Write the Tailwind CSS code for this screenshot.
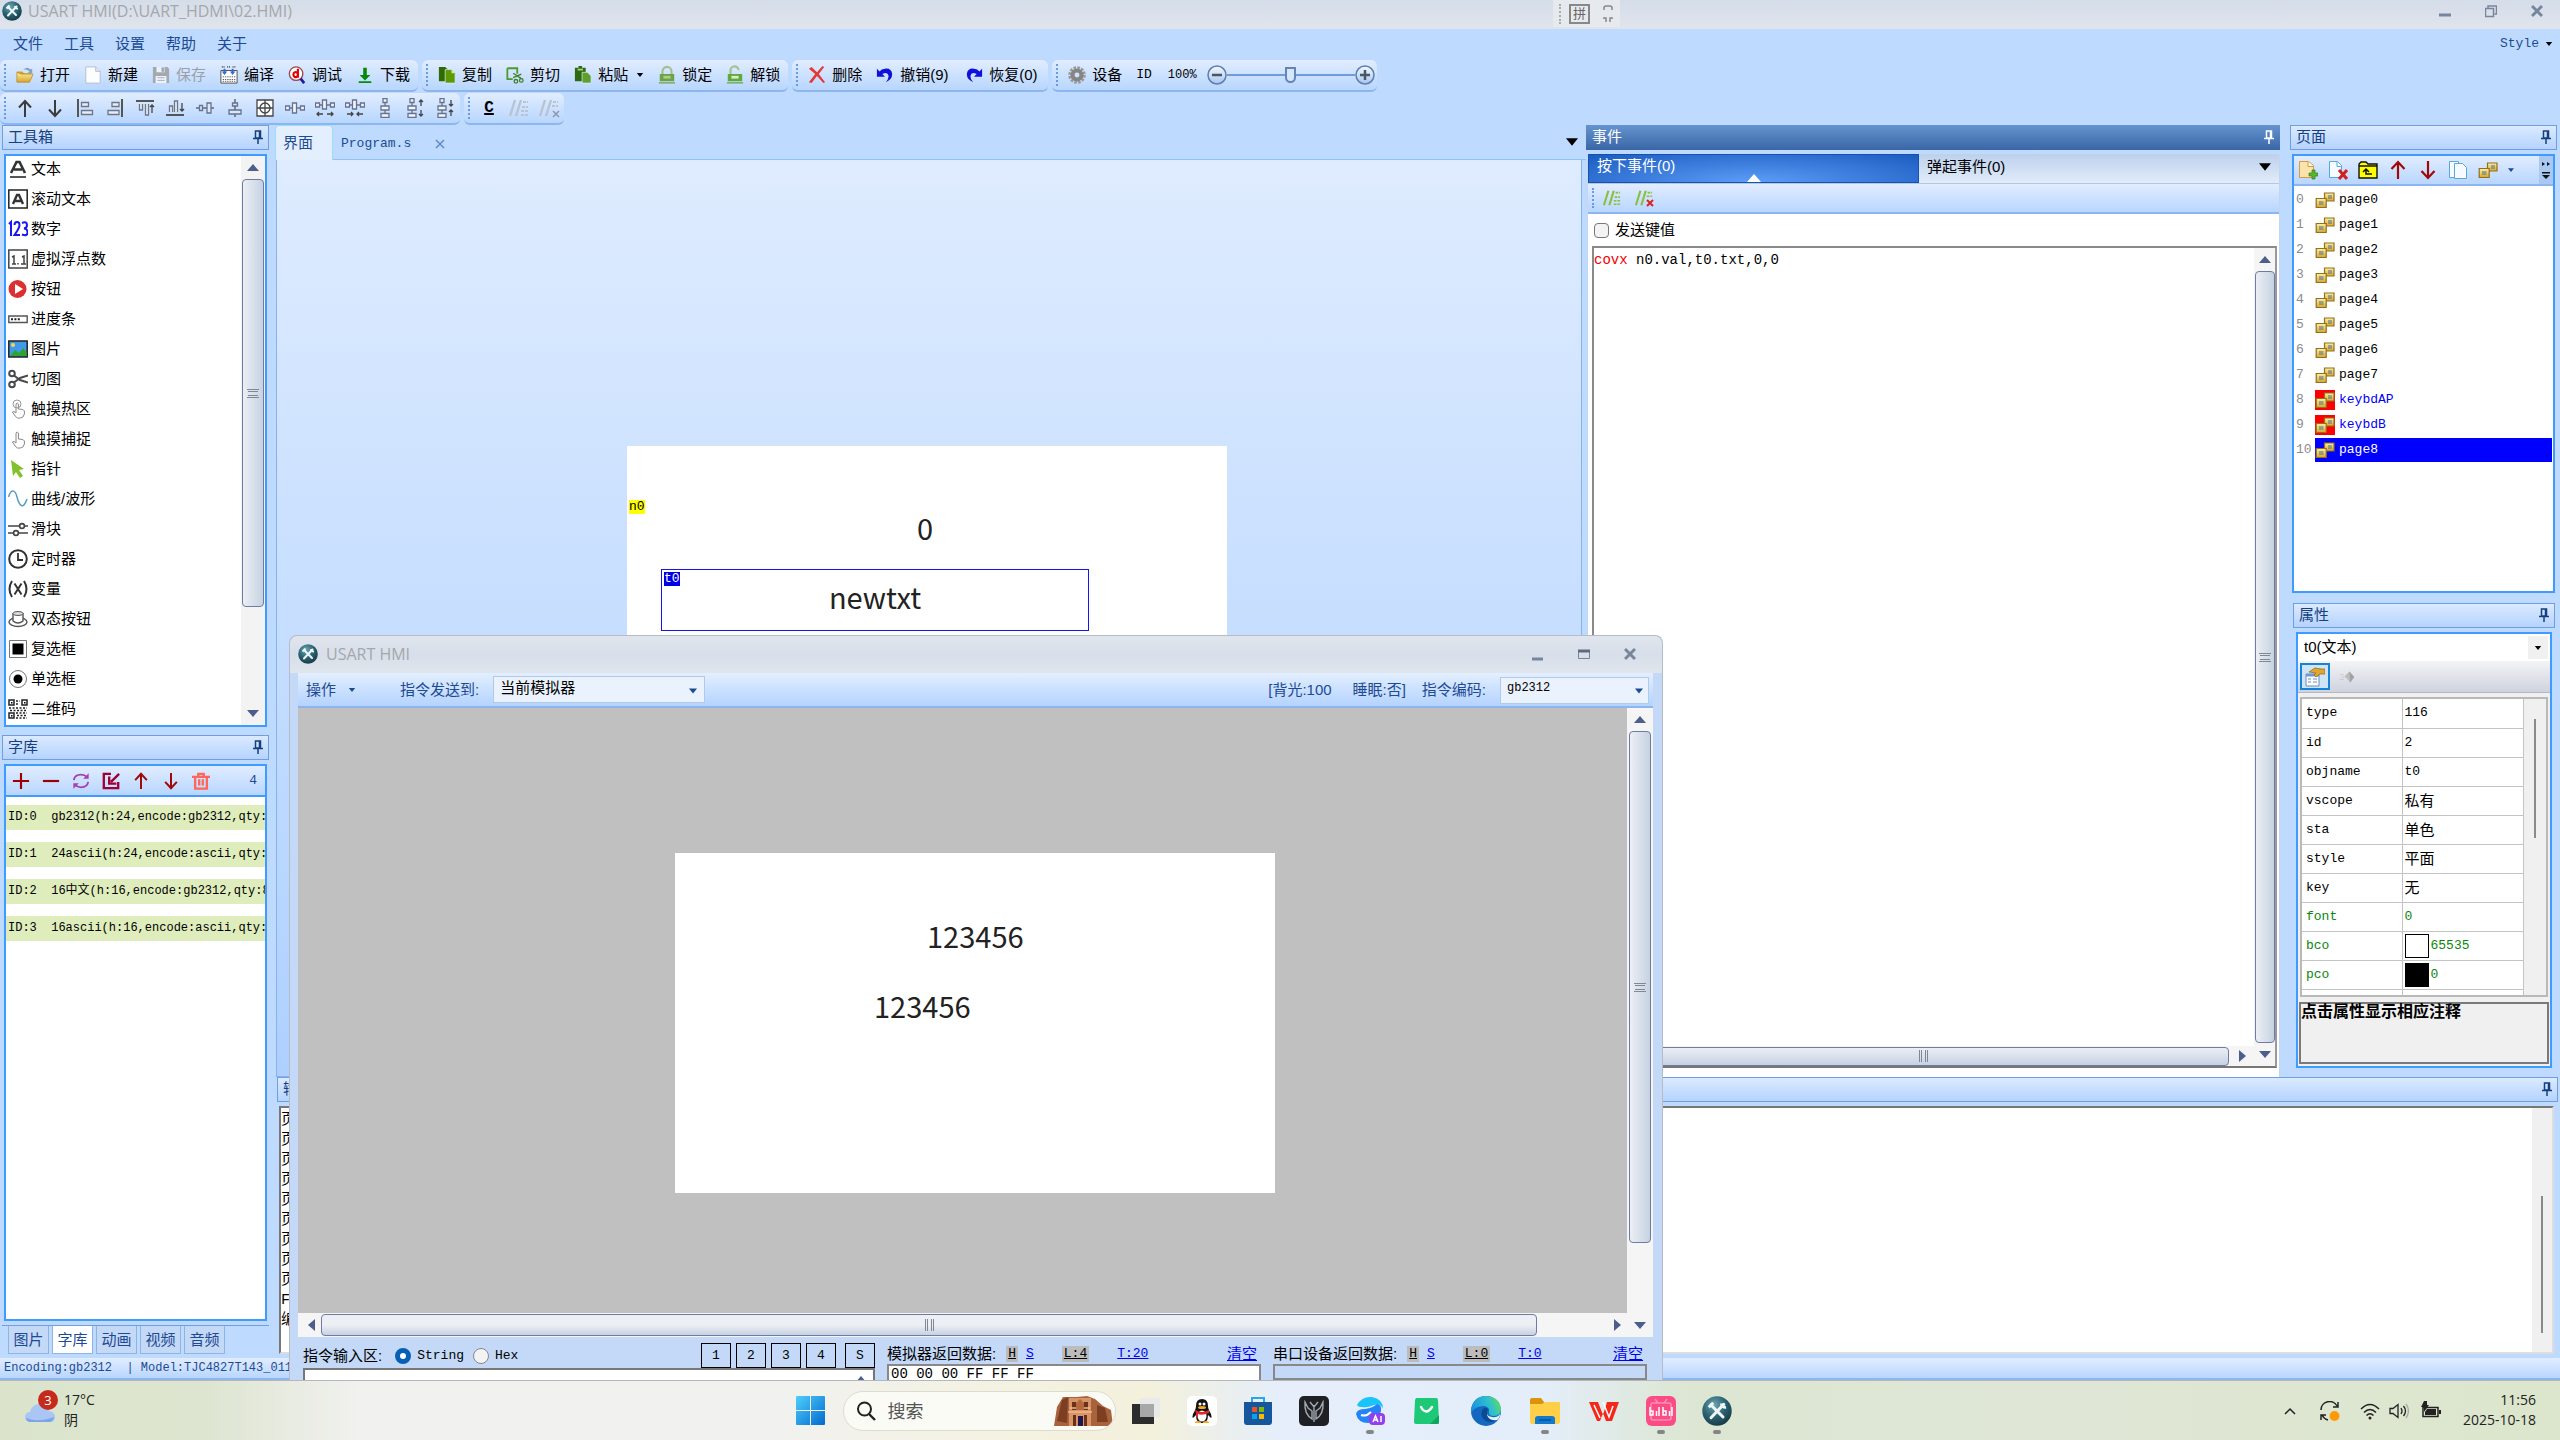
<!DOCTYPE html>
<html lang="zh-CN">

<head>
  <meta charset="UTF-8">
  <meta name="viewport" content="width=device-width, initial-scale=1.0">
  <script src="https://cdn.jsdelivr.net/npm/@tailwindcss/browser@4"></script>
  <title>USART HMI</title>
</head>

<body class="flex h-screen flex-col overflow-hidden bg-[#bfdaff] font-['Liberation_Sans','Noto_Sans_CJK_SC',sans-serif] text-[15px] leading-5 text-black">

  <!-- 图标 -->
  <svg class="absolute h-0 w-0" aria-hidden="true">
    <defs>
      <radialGradient id="ball" cx="0.4" cy="0.3" r="0.8">
        <stop offset="0" stop-color="#6fa6b4" />
        <stop offset="0.5" stop-color="#2b6272" />
        <stop offset="1" stop-color="#14303c" />
      </radialGradient>
      <linearGradient id="gold" x1="0" y1="0" x2="0" y2="1">
        <stop offset="0" stop-color="#fdf0a0" />
        <stop offset="1" stop-color="#d8a62c" />
      </linearGradient>
      <linearGradient id="knob" x1="0" y1="0" x2="0" y2="1">
        <stop offset="0" stop-color="#f2f8ff" />
        <stop offset="1" stop-color="#a8c6ee" />
      </linearGradient>
      <linearGradient id="winblue" x1="0" y1="0" x2="1" y2="1">
        <stop offset="0" stop-color="#4fd0fb" />
        <stop offset="1" stop-color="#0369cf" />
      </linearGradient>
      <linearGradient id="edgeg" x1="0" y1="0.6" x2="1" y2="0.3">
        <stop offset="0" stop-color="#1a8fe0" />
        <stop offset="0.6" stop-color="#2cbfd0" />
        <stop offset="1" stop-color="#62dc5c" />
      </linearGradient>
    </defs>
    <symbol id="logo" viewBox="0 0 20 20">
      <circle cx="10" cy="10" r="9.8" fill="url(#ball)" />
      <path d="M6 6l8 8M14.5 5.500l-8.500 9" stroke="#eef8fa" stroke-width="2" stroke-linecap="round" />
      <path d="M4.500 7.500l3-3M13 5a2.500 2.500 0 0 0 3 2.500" stroke="#eef8fa" stroke-width="2" fill="none" />
    </symbol>
    <symbol id="pin" viewBox="0 0 10 14">
      <path d="M2.500 1h5v7h-5zM0 8.500h10M5 9v5M6.500 1v7" stroke="currentColor" stroke-width="1.500" fill="none" />
    </symbol>
    <symbol id="caret" viewBox="0 0 8 5"><path d="M0 0h8l-4 5z" fill="currentColor" /></symbol>
    <symbol id="tri-up" viewBox="0 0 12 7"><path d="M0 7h12l-6-7z" fill="#4c5f8c" /></symbol>
    <symbol id="tri-down" viewBox="0 0 12 7"><path d="M0 0h12l-6 7z" fill="#4c5f8c" /></symbol>
    <symbol id="tri-left" viewBox="0 0 7 12"><path d="M7 0v12l-7-6z" fill="#4c5f8c" /></symbol>
    <symbol id="tri-right" viewBox="0 0 7 12"><path d="M0 0v12l7-6z" fill="#4c5f8c" /></symbol>

    <symbol id="open" viewBox="0 0 20 20">
      <path d="M1 6h6l2 2h8v3H1z" fill="#d99f2b" />
      <path d="M8 4q5-4 8 0l2-1v5h-5l2-2q-3-3-7-2" fill="#7fa4c8" />
      <path d="M1 18V7l5 2h13l-4 9z" fill="url(#gold)" stroke="#b98420" stroke-width="0.8" />
    </symbol>
    <symbol id="new" viewBox="0 0 20 20"><path d="M2 1h11l5 5v13H2z" fill="#fbfdff" stroke="#b4bccb" /><path d="M13 1v5h5" fill="#dfe6f0" stroke="#b4bccb" /></symbol>
    <symbol id="save" viewBox="0 0 20 20"><path d="M1 1h16l2 2v16H1z" fill="#a3a9b1" /><path d="M5 1h9v6H5zM4 11h12v8H4z" fill="#eef2f7" /><path d="M11 2h2v4h-2zM6 13h8M6 16h8" stroke="#a3a9b1" fill="#a3a9b1" /></symbol>
    <symbol id="build" viewBox="0 0 20 20">
      <path d="M1 5h18v14H1z" fill="#fff" stroke="#444" />
      <path d="M3 15h14M3 17h14M3 12h14" stroke="#555" stroke-dasharray="1.500 1" />
      <path d="M2 1h4M8 1h4M14 1h4" stroke="#555" stroke-dasharray="1 1" stroke-width="2" />
      <path d="M4 3v3H2l3 4 3-4H6V3zM13 3v3h-2l3 4 3-4h-2V3z" fill="#3468d8" />
    </symbol>
    <symbol id="debug" viewBox="0 0 20 20"><circle cx="9" cy="8.500" r="7.500" fill="#fff" stroke="#9a4a4a" stroke-width="1.500" /><path d="M14 14l4 5" stroke="#1d1d9a" stroke-width="3" /><path d="M11 3v10M11 9.500a2.500 2.800 0 1 0 0 .1" stroke="#e80000" stroke-width="2.400" fill="none" /></symbol>
    <symbol id="download" viewBox="0 0 20 20"><path d="M8 2h4v8h4l-6 6-6-6h4zM3 17h14v2H3z" fill="#078a07" /></symbol>
    <symbol id="copy" viewBox="0 0 20 20"><path d="M1 1h7l3 3v13H1z" fill="#2f6b00" /><path d="M8 4h7l4 4v11H8z" fill="#5d9a00" stroke="#dcebff" stroke-width="0.8" /><path d="M15 4v4h4" fill="#cfe6a8" /></symbol>
    <symbol id="cut" viewBox="0 0 20 20"><path d="M1.500 2.500h11v6M1.500 2.500v12h6" fill="none" stroke="#4c9a2a" stroke-width="2" /><path d="M8 8l9 6M8 13l9-4" stroke="#3f7f20" stroke-width="1.500" /><circle cx="11" cy="17" r="2" fill="none" stroke="#3f7f20" stroke-width="1.400" /><circle cx="17" cy="16" r="2" fill="none" stroke="#3f7f20" stroke-width="1.400" /></symbol>
    <symbol id="paste" viewBox="0 0 20 20"><path d="M1 2h12v15H1zM5 0h4v3H5z" fill="#2d6a12" /><path d="M4 3h6v2H4z" fill="#a7d27c" /><path d="M9 7h6l4 4v8H9z" fill="#5da12c" stroke="#dcebff" stroke-width="0.8" /></symbol>
    <symbol id="lock" viewBox="0 0 20 20"><path d="M5 10V6a5 5 0 0 1 10 0v4" fill="none" stroke="#a5bf92" stroke-width="2.400" /><path d="M2 9h16v8H2zM1 18h18v1.500H1z" fill="#6da347" /><path d="M6 11h8v3H6z" fill="#a9cf8b" /></symbol>
    <symbol id="unlock" viewBox="0 0 20 20"><path d="M5 10V5.500a4.500 4.500 0 0 1 9-1" fill="none" stroke="#a5bf92" stroke-width="2.400" /><path d="M2 9h16v8H2zM1 18h18v1.500H1z" fill="#62a83c" /><path d="M6 11h8v3H6z" fill="#d7ebc6" /></symbol>
    <symbol id="del" viewBox="0 0 20 20"><path d="M1 3l3-2 6 6 6-7 2 1-6 8 7 9-2 1-7-8-6 8-3-1 7-9z" fill="#e23b36" /></symbol>
    <symbol id="undo" viewBox="0 0 20 20"><path d="M1 3v9h9l-3-3q6-3 7 2 0 4-3 7 7-3 7-9-1-7-8-6-4 0-6 3z" fill="#1010dc" /></symbol>
    <symbol id="redo" viewBox="0 0 20 20"><path d="M19 3v9h-9l3-3q-6-3-7 2 0 4 3 7-7-3-7-9 1-7 8-6 4 0 6 3z" fill="#1010dc" /></symbol>
    <symbol id="gear" viewBox="0 0 20 20"><circle cx="10" cy="10" r="8" fill="none" stroke="#9a9a9a" stroke-width="3.500" stroke-dasharray="2.800 1.400" /><circle cx="10" cy="10" r="5" fill="none" stroke="#858585" stroke-width="4.500" /></symbol>

    <!-- 对齐工具 -->
    <symbol id="a-up" viewBox="0 0 20 20"><path d="M10 19V4M4 9.500L10 3l6 6.500" fill="none" stroke="#3c3c3c" stroke-width="2" /></symbol>
    <symbol id="a-down" viewBox="0 0 20 20"><path d="M10 2v15M4 11.500l6 6.500 6-6.500" fill="none" stroke="#3c3c3c" stroke-width="2" /></symbol>
    <symbol id="al-left" viewBox="0 0 20 20"><path d="M3 1v18" stroke="#555" stroke-width="2" /><path d="M6.500 4.500h7v4h-7zM6.500 12.500h11v4h-11z" fill="#e8eef8" stroke="#6d7688" stroke-width="1.300" /></symbol>
    <symbol id="al-right" viewBox="0 0 20 20"><path d="M17 1v18" stroke="#555" stroke-width="2" /><path d="M7 4.500h7v4H7zM3 12.500h11v4H3z" fill="#e8eef8" stroke="#6d7688" stroke-width="1.300" /></symbol>
    <symbol id="al-top" viewBox="0 0 20 20"><path d="M1 3h18" stroke="#555" stroke-width="2" /><path d="M4.500 6v6h3V6M10.500 6v11h3V6" fill="#e8eef8" stroke="#6d7688" stroke-width="1.300" /><path d="M17 15V7M15 9l2-2 2 2" fill="none" stroke="#444" stroke-width="1.300" /></symbol>
    <symbol id="al-bottom" viewBox="0 0 20 20"><path d="M1 17h18" stroke="#555" stroke-width="2" /><path d="M4.500 14V8h3v6M9.500 14V3h3v11" fill="#e8eef8" stroke="#6d7688" stroke-width="1.300" /><path d="M17 5v8M15 11l2 2 2-2" fill="none" stroke="#444" stroke-width="1.300" /></symbol>
    <symbol id="al-mid" viewBox="0 0 20 20"><path d="M1 10h18" stroke="#555" stroke-width="1.300" /><path d="M4.500 7.500h3v5h-3zM12 5h4v10h-4z" fill="#dbe6f8" stroke="#66728e" stroke-width="1.300" /></symbol>
    <symbol id="al-center" viewBox="0 0 20 20"><path d="M10 1v18" stroke="#555" stroke-width="1.300" /><path d="M7.500 5h5v3h-5zM4 12h12v4H4z" fill="#dbe6f8" stroke="#66728e" stroke-width="1.300" /></symbol>
    <symbol id="al-grid" viewBox="0 0 20 20"><path d="M2 2h16v16H2zM10 2v16M2 10h16" fill="#fff" stroke="#444" stroke-width="1.300" /><circle cx="10" cy="10" r="5" fill="none" stroke="#444" stroke-width="1.300" /></symbol>
    <symbol id="dist-h" viewBox="0 0 20 20"><path d="M0.500 8h4v4h-4zM7.500 5h4v10h-4zM15.500 8h4v4h-4zM4.500 10h3M11.500 10h4" fill="#f2f6fc" stroke="#66728e" stroke-width="1.300" /></symbol>
    <symbol id="dist-hx" viewBox="0 0 20 20"><path d="M0.500 5h4v4h-4zM7.500 2h4v9h-4zM15.500 5h4v4h-4zM4.500 7h3M11.500 7h4" fill="#f2f6fc" stroke="#66728e" stroke-width="1.300" /><path d="M8 16H2M4 14l-2 2 2 2M12 16h6M16 14l2 2-2 2" fill="none" stroke="#444" stroke-width="1.300" /></symbol>
    <symbol id="dist-hi" viewBox="0 0 20 20"><path d="M0.500 5h4v4h-4zM7.500 2h4v9h-4zM15.500 5h4v4h-4zM4.500 7h3M11.500 7h4" fill="#f2f6fc" stroke="#66728e" stroke-width="1.300" /><path d="M8 16H2M6 14l2 2-2 2M12 16h6M14 14l-2 2 2 2" fill="none" stroke="#444" stroke-width="1.300" /></symbol>
    <symbol id="dist-v" viewBox="0 0 20 20"><path d="M8 0.500h4v4H8zM6 8h8v4H6zM6 15.500h8v4H6zM10 4.500V8M10 12v3.500" fill="#f2f6fc" stroke="#66728e" stroke-width="1.300" /></symbol>
    <symbol id="dist-vx" viewBox="0 0 20 20"><path d="M5 0.500h4v4H5zM3 8h8v4H3zM3 15.500h8v4H3zM7 4.500V8M7 12v3.500" fill="#f2f6fc" stroke="#66728e" stroke-width="1.300" /><path d="M16 8V2M14 4l2-2 2 2M16 12v6M14 16l2 2 2-2" fill="none" stroke="#444" stroke-width="1.300" /></symbol>
    <symbol id="dist-vi" viewBox="0 0 20 20"><path d="M5 0.500h4v4H5zM3 8h8v4H3zM3 15.500h8v4H3zM7 4.500V8M7 12v3.500" fill="#f2f6fc" stroke="#66728e" stroke-width="1.300" /><path d="M16 8V2M14 6l2 2 2-2M16 12v6M14 14l2-2 2 2" fill="none" stroke="#444" stroke-width="1.300" /></symbol>
    <symbol id="cmt" viewBox="0 0 20 20"><path d="M1 18L6 2M7 18l5-16" stroke="currentColor" stroke-width="2.400" /><path d="M14 4h5M13 9h6M12 13h7M12 17h7" stroke="currentColor" stroke-width="1.800" stroke-dasharray="3 1" /></symbol>
    <symbol id="uncmt" viewBox="0 0 20 20"><path d="M1 18L6 2M7 18l5-16" stroke="currentColor" stroke-width="2.400" /><path d="M14 4h5M13 8h6" stroke="currentColor" stroke-width="1.800" stroke-dasharray="3 1" /></symbol>

    <!-- 工具箱 -->
    <symbol id="t-text" viewBox="0 0 20 20"><path d="M3 14L8.500 3h3L17 14M6 10.500h8" stroke="#333" stroke-width="2.600" fill="none" /><path d="M2 18h16" stroke="#555" stroke-width="2" /></symbol>
    <symbol id="t-scroll" viewBox="0 0 20 20"><path d="M0.800 1h18.400v18H0.800z" fill="#fff" stroke="#222" stroke-width="1.500" /><path d="M5 15l4-9h2l4 9M7 12h6" stroke="#333" stroke-width="2.400" fill="none" /></symbol>
    <symbol id="t-num" viewBox="0 0 20 20"><path d="M1 5l2-2v14M6.500 6q0-3 2.500-3t2.500 3q0 3-5 10h5.500M14 4q5-2 5 2 0 3-3 3.500 3.500 0 3.500 4 0 4-5.500 2" stroke="#1818f0" stroke-width="2" fill="none" /></symbol>
    <symbol id="t-float" viewBox="0 0 20 20"><path d="M0.800 1h18.400v18H0.800z" fill="#fff" stroke="#444" stroke-width="1.500" /><path d="M4 8l2-1v8M14 8l2-1v8M4 15h4M13 15h5M10 14v1.500" stroke="#444" stroke-width="1.500" fill="none" /></symbol>
    <symbol id="t-btn" viewBox="0 0 20 20"><circle cx="9.500" cy="10" r="9" fill="#dc3030" /><path d="M7 5l8 5-8 5z" fill="#fff" /></symbol>
    <symbol id="t-prog" viewBox="0 0 20 20"><path d="M0.800 7h18.400v6.500H0.800z" fill="#fff" stroke="#555" stroke-width="1.400" /><path d="M3 10.200h9" stroke="#222" stroke-width="2" stroke-dasharray="2 1.400" /></symbol>
    <symbol id="t-pic" viewBox="0 0 20 20"><path d="M0.800 2h18.400v16H0.800z" fill="#3f9bea" stroke="#222" stroke-width="1.500" /><path d="M2 17l5-6 4 3 4-5 3.500 4v4z" fill="#2fa32f" /><circle cx="5" cy="6" r="2" fill="#ffd34d" /></symbol>
    <symbol id="t-cut" viewBox="0 0 20 20"><circle cx="4" cy="4.500" r="2.800" fill="none" stroke="#4a4a4a" stroke-width="2" /><circle cx="4" cy="15.500" r="2.800" fill="none" stroke="#4a4a4a" stroke-width="2" /><path d="M6 6.500l6 4.500 8 2.500M6 13.500l6-4.500 8-2.500" fill="none" stroke="#4a4a4a" stroke-width="2" /></symbol>
    <symbol id="t-hot" viewBox="0 0 20 20"><path d="M8 12V5q1.200-2 2.400 0v5q6 0 6 2v3q-1 4-4 4h-3q-2-1-5-6 1.500-1.500 3.600 1z" fill="#fff" stroke="#888" /><circle cx="9" cy="5" r="4" fill="none" stroke="#999" /></symbol>
    <symbol id="t-cap" viewBox="0 0 20 20"><path d="M8 12V4q1.200-2 2.400 0v6q6 0 6 2v3q-1 4-4 4h-3q-2-1-5-6 1.500-1.500 3.600 1z" fill="#fff" stroke="#888" /></symbol>
    <symbol id="t-ptr" viewBox="0 0 20 20"><path d="M3 1l13 9-5 1 4 6-3 2-4-6-3 4z" fill="#82c02c" /></symbol>
    <symbol id="t-wave" viewBox="0 0 20 20"><path d="M0.500 8C3 0 7 0 9 8s6 14 10 2" fill="none" stroke="#5b9fc0" stroke-width="1.500" /></symbol>
    <symbol id="t-slide" viewBox="0 0 20 20"><path d="M0 7h20M0 14h20" stroke="#444" stroke-width="1.600" /><circle cx="14" cy="7" r="2.400" fill="#fff" stroke="#444" stroke-width="1.600" /><circle cx="8" cy="14" r="2.400" fill="#fff" stroke="#444" stroke-width="1.600" /></symbol>
    <symbol id="t-clock" viewBox="0 0 20 20"><circle cx="10" cy="10" r="8.800" fill="#fff" stroke="#333" stroke-width="2" /><path d="M10 4v7h5" fill="none" stroke="#333" stroke-width="1.800" /></symbol>
    <symbol id="t-var" viewBox="0 0 20 20"><path d="M4 2q-5 8 0 16M16 2q5 8 0 16M6.500 4.500l7 11M13.500 4.500l-7 11" fill="none" stroke="#333" stroke-width="2" /></symbol>
    <symbol id="t-dual" viewBox="0 0 20 20"><ellipse cx="10" cy="13" rx="9" ry="4.500" fill="#fff" stroke="#555" stroke-width="1.400" /><path d="M5 4v8q5 4 10 0V4" fill="#fff" stroke="#555" stroke-width="1.400" /><ellipse cx="10" cy="4.500" rx="5" ry="2" fill="#ddd" stroke="#555" /></symbol>
    <symbol id="t-check" viewBox="0 0 20 20"><path d="M1.500 1.500h17v17h-17z" fill="#fff" stroke="#777" /><path d="M4.500 4.500h11v11h-11z" fill="#000" /></symbol>
    <symbol id="t-radio" viewBox="0 0 20 20"><circle cx="10" cy="10" r="8.500" fill="#fff" stroke="#777" /><circle cx="10" cy="10" r="4.500" fill="#000" /></symbol>
    <symbol id="t-qr" viewBox="0 0 20 20"><path d="M1 1h5v5H1zM14 1h5v5h-5zM1 14h5v5H1z" fill="none" stroke="#222" stroke-width="1.500" /><path d="M8 2h4M8 5h3M1 9h18M2 11.500h16M8 14h11M9 16.500h9M8 19h11" stroke="#222" stroke-width="1.500" stroke-dasharray="2 1.500" /><path d="M3 3h1.500v1.500H3zM16 3h1.500v1.500H16zM3 16h1.500v1.500H3z" /></symbol>

    <!-- 字库 / 页面 -->
    <symbol id="plus" viewBox="0 0 20 20"><path d="M10 1v18M1 10h18" stroke="#9c0000" stroke-width="2.400" /></symbol>
    <symbol id="minus" viewBox="0 0 20 20"><path d="M1 10h18" stroke="#9c0000" stroke-width="2.400" /></symbol>
    <symbol id="refresh" viewBox="0 0 20 20"><path d="M2 9q1-6 8-6 4 0 7 3M18 11q-1 6-8 6-4 0-7-3" fill="none" stroke="#a53cb8" stroke-width="2" /><path d="M18.500 1.500v6h-6zM1.500 18.500v-6h6z" fill="#a53cb8" /></symbol>
    <symbol id="import" viewBox="0 0 20 20"><path d="M10 2H2v16h16v-7M19 2l-9 9M8 5v8h8" fill="none" stroke="#a00030" stroke-width="2.600" /></symbol>
    <symbol id="r-up" viewBox="0 0 20 20"><path d="M10 19V3M3.500 9L10 2l6.500 7" fill="none" stroke="#a00808" stroke-width="2.200" /></symbol>
    <symbol id="r-down" viewBox="0 0 20 20"><path d="M10 1v16M3.500 11l6.500 7 6.500-7" fill="none" stroke="#a00808" stroke-width="2.200" /></symbol>
    <symbol id="trash" viewBox="0 0 20 20"><path d="M0 5.500h20M7 5V2h6v3M3.500 6v12.500h13V6M8 8v7M12 8v7" fill="none" stroke="#ff6658" stroke-width="2.600" /></symbol>
    <symbol id="p-add" viewBox="0 0 20 20"><path d="M1.500 1.500h9l5 4v12h-14z" fill="#fce3ae" stroke="#d99a3a" /><path d="M10 1.500v5h5.500" fill="#fff" stroke="#d99a3a" /><path d="M11 13h3v-3h3v3h3v3h-3v3h-3v-3h-3z" fill="#59b531" stroke="#2f7f16" stroke-width="0.700" /></symbol>
    <symbol id="p-del" viewBox="0 0 20 20"><path d="M1.500 1.500h8l4 4v12h-12z" fill="#f5fbff" stroke="#58a8d8" /><path d="M9 1.500v5h4.500" fill="#fff" stroke="#58a8d8" /><path d="M11 10l8 9M19 10l-8 9" stroke="#d02020" stroke-width="3" /></symbol>
    <symbol id="p-folder" viewBox="0 0 20 20"><path d="M1 18V4l2-2h5l2 2h9v14z" fill="#ffff00" stroke="#111" stroke-width="1.400" /><path d="M1 6h18M14 14H8V9M5 12l3-3 3 3" fill="none" stroke="#111" stroke-width="1.500" /></symbol>
    <symbol id="p-copy" viewBox="0 0 20 20"><path d="M1.500 1.500h9v16h-9z" fill="#f5fbff" stroke="#58a8d8" /><path d="M6.500 3.500h8l4 4v11h-12z" fill="#f5fbff" stroke="#58a8d8" /></symbol>
    <symbol id="page" viewBox="0 0 20 20"><path d="M9.500 3h9.500v8H9.500z" fill="url(#gold)" stroke="#93701c" stroke-width="1.200" /><path d="M1.200 8.500h10v9h-10z" fill="url(#gold)" stroke="#93701c" stroke-width="1.200" /><path d="M4 12h4.500M4 14h4.500M13 6h4M13 8h4" stroke="#456a9a" /></symbol>
    <symbol id="cat" viewBox="0 0 20 20"><path d="M1 7h13v12H1z" fill="#fff" stroke="#6a8ec0" /><path d="M1 7h13v2.500H1z" fill="#6a9be0" /><path d="M3 12h3M8 12h4M3 15h3M8 15h4" stroke="#6a8ec0" /><path d="M4 5l6-4 6 1h4v5h-5l-4 3-2-2 2-2z" fill="#e0a830" stroke="#8a6414" stroke-width="0.700" /></symbol>
    <symbol id="cube" viewBox="0 0 20 20"><path d="M7 9l6-6 6 7-5 7z" fill="#bdbdbd" /><path d="M13 3l6 7-5 7z" fill="#a2a2a2" /><path d="M1 7h5M3 10h4M1 13h5" stroke="#c4c4c4" /></symbol>
  </svg>

  <div class="relative flex min-h-0 flex-1 flex-col overflow-hidden border-b border-[#b4b8bc]">
    <!-- 标题栏 -->
    <header class="flex h-[29px] shrink-0 items-center bg-linear-to-b from-[#d5dde9] to-[#e0e4ec] pb-2 pl-0.5">
      <svg class="h-5 w-5"><use href="#logo" /></svg>
      <h1 class="ml-1.5 flex-1 font-['Open_Sans','Noto_Sans_CJK_SC',sans-serif] text-base leading-5 text-[#a5a7ab]">USART HMI(D:\UART_HDMI\02.HMI)</h1>
      <div class="flex items-center gap-[34px] pr-[17px] text-[#77869c]">
        <button class="h-4 w-3" aria-label="最小化"><svg class="h-4 w-3" viewBox="0 0 12 16"><path d="M0 12h12" stroke="currentColor" stroke-width="3" /></svg></button>
        <button class="h-4 w-3" aria-label="还原"><svg class="h-4 w-3" viewBox="0 0 12 16"><path d="M3 5V3h8.500v8h-2M0.500 5.500h8v8h-8z" fill="none" stroke="currentColor" stroke-width="1.500" /></svg></button>
        <button class="h-4 w-3" aria-label="关闭"><svg class="h-4 w-3" viewBox="0 0 12 16"><path d="M1 3l10 10M11 3L1 13" stroke="currentColor" stroke-width="3" /></svg></button>
      </div>
    </header>
    <!-- 输入法浮条 -->
    <div class="absolute top-0 left-[1553px] flex h-[27px] items-center gap-3 bg-[#e6e9ee] px-1.5 text-[#666]">
      <div class="h-5 border-l-2 border-dotted border-[#aaa]"></div>
      <span class="-ml-1 border-2 border-[#888] px-0.5 text-[13px] leading-4">拼</span>
      <svg class="h-5 w-3" viewBox="0 0 12 20"><path d="M2 6V4q0-2 2-2h4q2 0 2 2v2M1 14h3v4M11 14H8v4" fill="none" stroke="#888" stroke-width="1.500" /></svg>
    </div>

    <!-- 菜单 -->
    <nav class="flex h-[31px] shrink-0 items-center gap-[21px] px-[13px] pb-0.5 text-[#1d4a94]">
      <button>文件</button><button>工具</button><button>设置</button><button>帮助</button><button>关于</button>
      <button class="-mr-1.5 ml-auto flex items-center gap-1.5 font-['Liberation_Mono',monospace] text-[13px]">Style <svg class="h-1 w-2 text-black"><use href="#caret" /></svg></button>
    </nav>

    <!-- 工具栏 -->
    <div class="flex shrink-0 gap-1" id="bar1"></div>
    <div class="mt-px flex shrink-0 gap-1" id="bar2"></div>

    <!-- 主区 -->
    <main class="flex min-h-0 flex-1">
      <!-- 左侧 -->
      <aside class="flex w-[275px] shrink-0 flex-col pr-1.5 pl-0.5">
        <section class="flex h-[610px] shrink-0 flex-col">
          <h2 class="flex h-[25px] items-center justify-between border border-[#6f9fe0] bg-linear-to-b from-[#dbeaff] to-[#b5d3ff] px-[5px] pb-0.5 text-[#153f7f]">工具箱<svg class="h-3.5 w-2.5"><use href="#pin" /></svg></h2>
          <div class="mx-0.5 mt-1 mb-2 flex min-h-0 flex-1 overflow-hidden border-2 border-[#3f9bff] bg-white">
            <ul class="flex-1" id="tools"></ul>
            <div class="flex w-6 flex-col items-center bg-[#f3f3f4] py-2">
              <svg class="h-[7px] w-3"><use href="#tri-up" /></svg>
              <div class="mt-2 flex h-[428px] w-[22px] items-center justify-center rounded-sm border border-[#6f7ba3] bg-linear-to-r from-[#eceff4] to-[#c6d2e2]"><div class="h-[9px] w-3 border-y border-[#808896] p-px"><div class="h-[5px] border-y border-[#808896]"></div></div></div>
              <svg class="mt-auto h-[7px] w-3"><use href="#tri-down" /></svg>
            </div>
          </div>
        </section>
        <section class="flex min-h-0 flex-1 flex-col">
          <h2 class="flex h-[25px] items-center justify-between border border-[#6f9fe0] bg-linear-to-b from-[#dbeaff] to-[#b5d3ff] px-[5px] pb-0.5 text-[#153f7f]">字库<svg class="h-3.5 w-2.5"><use href="#pin" /></svg></h2>
          <div class="mx-0.5 mt-1 flex min-h-0 flex-1 flex-col border-2 border-[#3f9bff] bg-white">
            <div class="flex h-[31px] items-center gap-3 border-b-2 border-[#3f9bff] bg-linear-to-b from-[#e1edff] to-[#b8d6ff] px-1.5" id="fontbar"></div>
            <ul class="space-y-3 overflow-hidden pt-2 font-['Liberation_Mono','Noto_Sans_CJK_SC',monospace] text-xs whitespace-pre" id="fonts"></ul>
          </div>
          <div class="mt-1 mb-1 flex h-[29px] gap-[3px] border-t border-[#6f9fe0] pl-1.5 text-[#1d4a94]">
            <button class="w-[41px] border border-t-0 border-[#8fb4e4] bg-[#c4d9f5]">图片</button>
            <button class="w-[41px] border border-t-0 border-[#8fb4e4] bg-white">字库</button>
            <button class="w-[41px] border border-t-0 border-[#8fb4e4] bg-[#c4d9f5]">动画</button>
            <button class="w-[41px] border border-t-0 border-[#8fb4e4] bg-[#c4d9f5]">视频</button>
            <button class="w-[41px] border border-t-0 border-[#8fb4e4] bg-[#c4d9f5]">音频</button>
          </div>
        </section>
      </aside>

      <div class="flex min-w-0 flex-1 flex-col">
        <div class="flex min-h-0 flex-1">
          <!-- 画布 -->
          <section class="flex min-w-0 flex-1 flex-col">
            <div class="flex h-[35px] items-center border-b border-[#8fc4f8] text-[#1d4a94]">
              <button class="h-[35px] w-[58px] rounded-t-sm border-x border-t border-[#9cdcf8] bg-[#e4effe] pr-3">界面</button>
              <button class="ml-2 pt-1 font-['Liberation_Mono',monospace] text-[13px]">Program.s</button>
              <button class="ml-6 pt-1 text-[#5f8ac4]" aria-label="关闭标签"><svg class="h-2.5 w-2.5" viewBox="0 0 10 10"><path d="M1 1l8 8M9 1l-8 8" stroke="currentColor" stroke-width="1.500" /></svg></button>
              <svg class="mr-2 ml-auto h-2 w-3 text-black"><use href="#caret" /></svg>
            </div>
            <div class="relative mr-1 ml-px flex-1 overflow-hidden border border-t-0 border-[#86b2ee] bg-linear-to-b from-[#dfecff] to-[#aed0ff]">
              <div class="absolute top-[286px] left-[350px] h-[340px] w-[600px] bg-white font-['Noto_Sans_CJK_SC',sans-serif] text-[29px] leading-[30px] text-[#222]">
                <span class="absolute top-[54px] left-0.5 bg-[#ffff00] font-['Liberation_Mono',monospace] text-[13px] leading-[14px] text-black">n0</span>
                <span class="absolute top-[66px] left-[290px]">0</span>
                <div class="absolute top-[123px] left-[34px] h-[62px] w-[428px] border border-[#1414f0] pt-[11px] text-center">newtxt</div>
                <span class="absolute top-[126px] left-[37px] bg-[#0000e8] font-['Liberation_Mono',monospace] text-[13px] leading-[14px] text-white">t0</span>
              </div>
            </div>
          </section>

          <!-- 事件 -->
          <section class="flex w-[697px] shrink-0 flex-col pr-[3px]">
            <h2 class="flex h-[25px] shrink-0 items-center justify-between bg-linear-to-b from-[#6594d0] to-[#3a66a5] px-1.5 pb-0.5 text-white">事件<svg class="h-3.5 w-2.5"><use href="#pin" /></svg></h2>
            <div class="mt-1 ml-px flex min-h-0 flex-1 flex-col border-x border-[#c4d5ee] bg-white">
              <div class="flex h-[30px] shrink-0 border-b border-[#b5c7df]">
                <button class="relative w-[331px] border border-[#1552b4] bg-radial-[at_50%_100%] from-[#5c9df8] to-[#1b5cc0] px-2 pb-1.5 text-left text-white">按下事件(0)<svg class="absolute bottom-0 left-[158px] h-2 w-[14px]" viewBox="0 0 14 8"><path d="M0 8l7-8 7 8z" fill="#fff" /></svg></button>
                <button class="flex flex-1 items-center justify-between bg-linear-to-b from-[#bdd0ec] to-[#e2ecfa] px-2 pb-1">弹起事件(0)<svg class="h-2 w-3"><use href="#caret" /></svg></button>
              </div>
              <div class="flex h-[30px] shrink-0 items-center gap-3 border-b-2 border-[#8db6ee] bg-linear-to-b from-[#e1edff] to-[#b8d6ff] px-1 text-[#8cbf3a]">
                <div class="h-5 border-l-2 border-dotted border-[#6a9be0]"></div>
                <button class="-ml-1" aria-label="注释"><svg class="h-[18px] w-5"><use href="#cmt" /></svg></button>
                <button class="relative" aria-label="取消注释"><svg class="h-[18px] w-5"><use href="#uncmt" /></svg><svg class="absolute right-0 bottom-0 h-2 w-2" viewBox="0 0 8 8"><path d="M1 1l6 6M7 1L1 7" stroke="#e02020" stroke-width="2" /></svg></button>
              </div>
              <label class="flex h-8 shrink-0 items-center gap-1.5 pl-1.5"><input type="checkbox" class="h-[15px] w-[15px] appearance-none rounded border border-[#777] bg-[#f3f3f3]">发送键值</label>
              <div class="mr-0.5 mb-[9px] ml-1 flex min-h-0 flex-1 border-2 border-[#8a8a8a] border-r-[#999] border-b-[#777]">
                <div class="flex min-w-0 flex-1 flex-col">
                  <code class="flex-1 font-['Liberation_Mono',monospace] text-sm leading-6"><span class="text-[#f00000]">covx</span> n0.val,t0.txt,0,0</code>
                  <div class="flex h-5 items-center bg-[#f5f5f6] pr-2">
                    <div class="flex h-[19px] flex-1 items-center rounded-sm border border-[#6f7ba3] bg-linear-to-b from-[#eceff4] to-[#c6d2e2] pl-[324px]"><div class="h-3 w-[9px] border-x border-[#808896] px-px"><div class="mx-auto h-3 w-[5px] border-x border-[#808896]"></div></div></div>
                    <svg class="ml-2.5 h-3 w-[7px]"><use href="#tri-right" /></svg>
                  </div>
                </div>
                <div class="flex w-[21px] flex-col items-center bg-[#f5f5f6] py-2">
                  <svg class="h-[7px] w-3"><use href="#tri-up" /></svg>
                  <div class="mt-2 mb-2 flex w-5 flex-1 items-center justify-center rounded-sm border border-[#6f7ba3] bg-linear-to-r from-[#eceff4] to-[#c6d2e2]"><div class="h-[9px] w-3 border-y border-[#808896] p-px"><div class="h-[5px] border-y border-[#808896]"></div></div></div>
                  <svg class="h-[7px] w-3"><use href="#tri-down" /></svg>
                </div>
              </div>
            </div>
          </section>

          <!-- 右侧 -->
          <aside class="flex w-[277px] shrink-0 flex-col pl-[7px]">
            <section class="mr-[3px] flex h-[468px] shrink-0 flex-col">
              <h2 class="flex h-[25px] shrink-0 items-center justify-between border border-[#6f9fe0] bg-linear-to-b from-[#dbeaff] to-[#b5d3ff] px-[5px] pb-0.5 text-[#153f7f]">页面<svg class="h-3.5 w-2.5"><use href="#pin" /></svg></h2>
              <div class="mx-0.5 mt-1 flex min-h-0 flex-1 flex-col border-2 border-[#3f9bff] bg-white">
                <div class="flex h-[30px] shrink-0 items-center gap-2.5 border-b-2 border-[#8db6ee] bg-linear-to-b from-[#e1edff] to-[#b8d6ff] pl-1" id="pagebar"></div>
                <ul id="pages" class="pt-px"></ul>
              </div>
            </section>
            <section class="mt-[10px] mr-[5px] ml-[3px] mb-[9px] flex min-h-0 flex-1 flex-col">
              <h2 class="flex h-[25px] shrink-0 items-center justify-between border border-[#6f9fe0] bg-linear-to-b from-[#dbeaff] to-[#b5d3ff] px-[5px] pb-0.5 text-[#153f7f]">属性<svg class="h-3.5 w-2.5"><use href="#pin" /></svg></h2>
              <div class="mx-[3px] mt-1 flex min-h-0 flex-1 flex-col border-2 border-[#3f9bff] bg-[#f0f0f0]">
                <div class="relative h-[27px] shrink-0 bg-white">
                  <select aria-label="控件" class="h-full w-full appearance-none pb-0.5 pl-1.5"><option>t0(文本)</option></select>
                  <div class="pointer-events-none absolute top-0.5 right-0.5 flex h-[23px] w-5 items-center justify-center bg-[#f0f0f0]"><svg class="h-1 w-2"><use href="#caret" /></svg></div>
                </div>
                <div class="mb-1 flex h-8 shrink-0 items-center gap-2 border-b border-[#b5b8c0] bg-linear-to-b from-[#f4f4f6] to-[#cfd3de] pl-0.5">
                  <button class="flex h-[27px] w-[30px] items-center justify-center border-2 border-[#1683d8] bg-[#cfe4f7]" aria-label="分类"><svg class="h-5 w-5"><use href="#cat" /></svg></button>
                  <button aria-label="事件"><svg class="h-4 w-[18px]"><use href="#cube" /></svg></button>
                </div>
                <div class="mx-0.5 flex h-[300px] min-h-0 shrink-0 overflow-hidden border-2 border-[#b9b9b9]">
                  <div class="flex-1 overflow-hidden">
                    <table class="w-full table-fixed border-collapse bg-white">
                      <colgroup><col class="w-[100px]"><col></colgroup>
                      <tbody id="props"></tbody>
                    </table>
                  </div>
                  <div class="flex w-[22px] justify-center pt-5"><div class="h-[119px] w-0.5 bg-[#8a8a8a]"></div></div>
                </div>
                <p class="mx-px mt-[5px] mb-0.5 flex-1 border-2 border-[#7a7a7a] text-base leading-4 font-bold">点击属性显示相应注释</p>
              </div>
            </section>
          </aside>
        </div>

        <!-- 输出 -->
        <section class="mr-0.5 ml-0.5 flex h-[281px] shrink-0 flex-col">
          <h2 class="flex h-[25px] shrink-0 items-center justify-between border border-[#6f9fe0] bg-linear-to-b from-[#dbeaff] to-[#b5d3ff] px-[5px] pb-0.5 text-[#153f7f]">输出<svg class="h-3.5 w-2.5"><use href="#pin" /></svg></h2>
          <div class="mt-1 mr-1 mb-1 ml-0.5 flex flex-1 border-2 border-[#777] border-r-[#ddd] border-b-[#ddd] bg-white">
            <div class="flex-1 pt-[3px] font-['Liberation_Mono','Noto_Sans_CJK_SC',monospace]" id="log"></div>
            <div class="flex w-5 justify-center bg-[#f0f0f0] pt-[88px]"><div class="h-[137px] w-0.5 bg-[#8a8a8a]"></div></div>
          </div>
        </section>
      </div>
    </main>

    <!-- 状态栏 -->
    <footer class="flex h-[22px] shrink-0 items-center border-b-2 border-[#8db6ee] bg-linear-to-b from-[#e1edff] to-[#b8d6ff] px-1 font-['Liberation_Mono',monospace] text-xs whitespace-pre text-[#1d4a94]">Encoding:gb2312  | Model:TJC4827T143_011</footer>

    <!-- 模拟器窗口 -->
    <div class="absolute top-[635px] bottom-0 left-[289px] flex w-[1374px] flex-col rounded-t-lg border border-b-0 border-[#b4bcc8] bg-[#c3d9f7]">
      <div class="flex h-[37px] shrink-0 items-center rounded-t-lg bg-linear-to-b from-[#e0e5ed] via-[#d8dfea] to-[#e0e5ed] pr-[26px] pb-0.5 pl-2">
        <svg class="h-5 w-5"><use href="#logo" /></svg>
        <h2 class="ml-2 flex-1 font-['Open_Sans',sans-serif] text-base leading-5 text-[#a5a7ab]">USART HMI</h2>
        <div class="flex items-center gap-[34px] text-[#77869c]">
          <button class="h-4 w-3" aria-label="最小化"><svg class="h-4 w-3" viewBox="0 0 12 16"><path d="M0 13h11" stroke="currentColor" stroke-width="3" /></svg></button>
          <button class="h-4 w-3" aria-label="最大化"><svg class="h-4 w-3" viewBox="0 0 12 16"><path d="M0.500 4.500h11v8h-11z" fill="none" stroke="currentColor" /><path d="M0 3.500h12v3H0z" fill="#5f6b7c" /></svg></button>
          <button class="h-4 w-3" aria-label="关闭"><svg class="h-4 w-3" viewBox="0 0 12 16"><path d="M1 3l10 10M11 3L1 13" stroke="currentColor" stroke-width="3" /></svg></button>
        </div>
      </div>
      <div class="mr-[9px] ml-2 flex h-[35px] shrink-0 items-center border-b-2 border-[#8db6ee] bg-linear-to-b from-[#e3efff] to-[#b4d3ff] pr-1 pl-2 text-[#1d4a94]">
        <button class="flex items-center gap-3">操作<svg class="h-1 w-2"><use href="#caret" /></svg></button>
        <label for="target" class="ml-11">指令发送到:</label>
        <div class="relative ml-3.5 h-[27px] w-[212px]">
          <select id="target" class="h-full w-full appearance-none border border-[#b2c9e8] bg-[#eaf2fd] pb-1 pl-1.5 text-black"><option>当前模拟器</option></select>
          <svg class="pointer-events-none absolute top-3 right-2 h-1.5 w-2"><use href="#caret" /></svg>
        </div>
        <span class="ml-auto whitespace-pre">[背光:100     睡眠:否]</span>
        <label for="enc" class="ml-4">指令编码:</label>
        <div class="relative ml-3.5 h-[27px] w-[149px]">
          <select id="enc" class="h-full w-full appearance-none border border-[#b2c9e8] bg-[#eaf2fd] pb-1 pl-1.5 font-['Liberation_Mono',monospace] text-xs text-black"><option>gb2312</option></select>
          <svg class="pointer-events-none absolute top-3 right-1.5 h-1.5 w-2"><use href="#caret" /></svg>
        </div>
      </div>
      <div class="mr-[9px] ml-2 flex min-h-0 flex-1">
        <div class="flex min-w-0 flex-1 flex-col">
          <div class="relative flex-1 bg-[#c0c0c0]">
            <div class="absolute top-[145px] left-[377px] h-[340px] w-[600px] bg-white font-['Noto_Sans_CJK_SC',sans-serif] text-[29px] leading-[30px] text-[#222]">
              <span class="absolute top-[67px] left-[252px]">123456</span>
              <span class="absolute top-[137px] left-[199px]">123456</span>
            </div>
          </div>
          <div class="flex h-6 shrink-0 items-center bg-[#f5f5f6] pr-1.5 pl-2.5">
            <svg class="h-3 w-[7px]"><use href="#tri-left" /></svg>
            <div class="ml-1.5 flex h-[22px] w-[1216px] items-center justify-center rounded-sm border border-[#6f7ba3] bg-linear-to-b from-[#eceff4] from-50% to-[#c6d2e2]"><div class="h-3 w-[9px] border-x border-[#808896] px-px"><div class="mx-auto h-3 w-[5px] border-x border-[#808896]"></div></div></div>
            <svg class="ml-auto h-3 w-[7px]"><use href="#tri-right" /></svg>
          </div>
        </div>
        <div class="flex w-[26px] shrink-0 flex-col items-center bg-[#f5f5f6] py-2">
          <svg class="h-[7px] w-3"><use href="#tri-up" /></svg>
          <div class="mt-2 flex h-[512px] w-[22px] items-center justify-center rounded-sm border border-[#6f7ba3] bg-linear-to-r from-[#eceff4] to-[#c6d2e2]"><div class="h-[9px] w-3 border-y border-[#808896] p-px"><div class="h-[5px] border-y border-[#808896]"></div></div></div>
          <svg class="mt-auto h-[7px] w-3"><use href="#tri-down" /></svg>
        </div>
      </div>
      <div class="flex h-[43px] shrink-0 gap-3 overflow-hidden pr-[15px] pl-[13px]">
        <div class="flex w-[572px] flex-col">
          <div class="flex h-[31px] shrink-0 items-center gap-[5px] pt-1.5">
            <span class="mr-2">指令输入区:</span>
            <label class="mr-1 flex items-center gap-1.5 font-['Liberation_Mono',monospace] text-[13px]"><input type="radio" name="mode" checked class="h-4 w-4 appearance-none rounded-full border-[5px] border-[#0560b6] bg-white">String</label>
            <label class="flex items-center gap-1.5 font-['Liberation_Mono',monospace] text-[13px]"><input type="radio" name="mode" class="h-4 w-4 appearance-none rounded-full border border-[#888] bg-[#f3f3f3]">Hex</label>
            <button class="ml-auto h-[25px] w-[30px] border border-black font-['Liberation_Mono',monospace] text-[13px]">1</button>
            <button class="h-[25px] w-[30px] border border-black font-['Liberation_Mono',monospace] text-[13px]">2</button>
            <button class="h-[25px] w-[30px] border border-black font-['Liberation_Mono',monospace] text-[13px]">3</button>
            <button class="h-[25px] w-[30px] border border-black font-['Liberation_Mono',monospace] text-[13px]">4</button>
            <button class="ml-1 h-[25px] w-[30px] border border-black font-['Liberation_Mono',monospace] text-[13px]">S</button>
          </div>
          <div class="relative flex-1">
            <textarea aria-label="指令" class="h-10 w-full resize-none border-2 border-[#777] bg-white"></textarea>
            <svg class="absolute top-2 right-2 h-[7px] w-3"><use href="#tri-up" /></svg>
          </div>
        </div>
        <div class="flex w-[374px] flex-col">
          <div class="flex h-[27px] shrink-0 items-center pt-1.5">
            <span>模拟器返回数据:</span>
            <a href="#" class="ml-2.5 bg-[#bcbcbc] px-0.5 font-['Liberation_Mono',monospace] text-[13px] leading-4 underline">H</a>
            <a href="#" class="ml-2 font-['Liberation_Mono',monospace] text-[13px] text-[#0000ee] underline">S</a>
            <a href="#" class="ml-7 bg-[#bcbcbc] px-0.5 font-['Liberation_Mono',monospace] text-[13px] leading-4 underline">L:4</a>
            <a href="#" class="ml-7 font-['Liberation_Mono',monospace] text-[13px] text-[#0000ee] underline">T:20</a>
            <a href="#" class="mr-1 ml-auto text-[#0000ee] underline">清空</a>
          </div>
          <div class="h-10 border-2 border-[#888] bg-white pl-0.5 font-['Liberation_Mono',monospace] text-sm leading-4">00 00 00 FF FF FF</div>
        </div>
        <div class="flex w-[374px] flex-col">
          <div class="flex h-[27px] shrink-0 items-center pt-1.5">
            <span>串口设备返回数据:</span>
            <a href="#" class="ml-2.5 bg-[#bcbcbc] px-0.5 font-['Liberation_Mono',monospace] text-[13px] leading-4 underline">H</a>
            <a href="#" class="ml-2 font-['Liberation_Mono',monospace] text-[13px] text-[#0000ee] underline">S</a>
            <a href="#" class="ml-7 bg-[#bcbcbc] px-0.5 font-['Liberation_Mono',monospace] text-[13px] leading-4 underline">L:0</a>
            <a href="#" class="ml-7 font-['Liberation_Mono',monospace] text-[13px] text-[#0000ee] underline">T:0</a>
            <a href="#" class="mr-1 ml-auto text-[#0000ee] underline">清空</a>
          </div>
          <div class="h-10 border-2 border-[#888]"></div>
        </div>
      </div>
    </div>
  </div>

  <!-- 任务栏 -->
  <div class="flex h-[59px] shrink-0 items-center bg-[linear-gradient(90deg,#dbe4cb_0%,#dde5d0_8%,#f1f1ef_14%,#f1f1f0_30%,#f4f2e0_40%,#f3f0dc_45%,#e5eefa_50%,#e4eefb_60%,#dce6d2_66%,#dfe6d6_80%,#dce6cc_100%)] font-['Open_Sans','Noto_Sans_CJK_SC',sans-serif] text-[#222]">
    <div class="flex flex-1 items-center gap-2 pl-6">
      <div class="relative">
        <svg class="h-[34px] w-8" viewBox="0 0 32 34"><path d="M6 28a5 5 0 0 1 0-10q2-8 10-8 7 0 9 7 6 1 6 6 0 5-5 5z" fill="#a9c6f4" /><path d="M2 24q12 5 28-1-1 5-5 5H6q-4-1-4-4z" fill="#7ba4ea" /></svg>
        <span class="absolute -top-1 -right-0.5 h-5 w-5 rounded-full bg-[#c42b1c] text-center text-[13px] text-white">3</span>
      </div>
      <div class="pb-0.5 text-sm leading-5">17°C<br>阴</div>
    </div>
    <div class="mr-[34px] flex items-center">
      <button class="flex w-[57px] justify-center" aria-label="开始"><svg class="h-[29px] w-[29px]" viewBox="0 0 29 29"><path d="M0 1q0-1 1-1h13v14H0zM15 0h13q1 0 1 1v13H15zM0 15h14v14H1q-1 0-1-1zM15 15h14v13q0 1-1 1H15z" fill="url(#winblue)" /></svg></button>
      <label class="mr-0.5 ml-1 flex h-10 w-[273px] items-center overflow-hidden rounded-full border border-[#dcdccf] bg-[#fbfbf5] pr-0.5 pl-3">
        <svg class="h-5 w-5 shrink-0" viewBox="0 0 20 20"><circle cx="8.500" cy="8" r="6.500" fill="none" stroke="#222" stroke-width="2" /><path d="M13 13l6 6" stroke="#222" stroke-width="2.400" /></svg>
        <input type="text" placeholder="搜索" class="ml-3 min-w-0 flex-1 bg-transparent text-lg placeholder:text-[#555]">
        <svg class="h-8 w-[60px] shrink-0" viewBox="0 0 60 32"><path d="M1 31L4 12 10 2h14l10-1 8 3 8 7 8 4 2 16z" fill="#a8623c" /><path d="M4 26L9 5l6-3-1 26zM44 10l8 3 3 14H44z" fill="#7c3f22" /><path d="M16 3h22v28H16z" fill="#d89468" /><path d="M19 7h4v8h-4zM31 7h4v8h-4zM20 20h3v11h-3zM31 20h3v11h-3z" fill="#6b3018" /><path d="M25 21h5v10h-5z" fill="#1e1850" /><path d="M15 17h24M17 13h20" stroke="#f0b78c" stroke-width="1.500" /><path d="M27 4l4 4v7h-8V8z" fill="#b5683f" /></svg>
      </label>
      <button class="flex h-[59px] w-14 items-center justify-center" aria-label="任务视图"><svg class="h-7 w-[30px]" viewBox="0 0 30 28"><path d="M1 7h22v20H1z" fill="#2c2c2c" /><path d="M9 1h20v19H9z" fill="#e9e9e9" /><path d="M9 7h14v13H9z" fill="#a8a8a8" /></svg></button>
      <button class="flex h-[59px] w-14 items-center justify-center" aria-label="QQ"><svg class="h-[30px] w-[30px]" viewBox="0 0 30 30"><rect width="30" height="30" rx="5" fill="#fff" /><path d="M15 3q6 0 6 7 0 3 3 8 1 3 0 4l-3-3q0 8-6 8t-6-8l-3 3q-1-1 0-4 3-5 3-8 0-7 6-7z" fill="#111" /><ellipse cx="15" cy="20" rx="4.500" ry="5.500" fill="#fff" /><path d="M8 14q7 4 14 0v3q-7 3-11 1v3H9v-4z" fill="#e8242c" /><circle cx="13" cy="8" r="1.500" fill="#fff" /><circle cx="17" cy="8" r="1.500" fill="#fff" /><ellipse cx="15" cy="11.500" rx="4" ry="1.500" fill="#f7a81b" /><path d="M8 26q3-2 6 0v1H8zM16 26q3-2 6 0v1h-6z" fill="#f7a81b" /></svg></button>
      <button class="flex h-[59px] w-14 items-center justify-center" aria-label="应用商店"><svg class="h-[30px] w-[30px]" viewBox="0 0 30 30"><path d="M9 6V2h12v4" fill="none" stroke="#28a8ea" stroke-width="2" /><path d="M1 6h28v20q0 3-3 3H4q-3 0-3-3z" fill="#15569c" /><path d="M9 11h5v5H9z" fill="#f25022" /><path d="M16 11h5v5h-5z" fill="#7fba00" /><path d="M9 18h5v5H9z" fill="#00a4ef" /><path d="M16 18h5v5h-5z" fill="#ffb900" /></svg></button>
      <button class="flex h-[59px] w-14 items-center justify-center" aria-label="控制台"><svg class="h-[30px] w-[30px]" viewBox="0 0 30 30"><rect width="30" height="30" rx="5" fill="#1e2024" /><path d="M6 6q-1 12 7 17V15l-4-3zM24 6q1 12-7 17V15l4-3zM15 9v17M11 6l4 5 4-5" fill="none" stroke="#a3a8b0" stroke-width="1.400" /></svg></button>
      <button class="relative flex h-[59px] w-14 items-center justify-center" aria-label="AI 浏览器"><svg class="h-[30px] w-[30px]" viewBox="0 0 30 30"><path d="M2 9Q7 0 17 1q11 2 11 12-2-6-9-4-7 3-12 2-4 0-5-2z" fill="#18c4f8" /><path d="M1 18q1-5 9-5 8-1 12-5 5 1 4 7-2 10-13 12-10 0-12-9z" fill="#2284f6" /><path d="M6 19q5 2 10-3" stroke="#fff" stroke-width="2" fill="none" /><rect x="14" y="17" width="16" height="12" rx="4" fill="#9440ee" /><path d="M18 26l2.500-6 2.500 6M19 24h3M26 20v6" stroke="#fff" stroke-width="1.500" fill="none" /></svg><span class="absolute bottom-1.5 h-1 w-2 rounded-full bg-[#858585]"></span></button>
      <button class="flex h-[59px] w-[59px] items-center justify-center" aria-label="应用市场"><svg class="h-[30px] w-[30px]" viewBox="0 0 30 30"><path d="M4 2h20q2 0 2 2l1 22q0 2-2 2H4q-2 0-2-2L3 4z" fill="#1dc877" /><path d="M18 28l9-9v8q0 1-2 1z" fill="#0fa55e" /><path d="M9 11q5 9 11 0" fill="none" stroke="#fff" stroke-width="2.500" stroke-linecap="round" /></svg></button>
      <button class="flex h-[59px] w-[59px] items-center justify-center" aria-label="Edge"><svg class="h-[30px] w-[30px]" viewBox="0 0 30 30"><circle cx="15" cy="15" r="15" fill="#1468c0" /><path d="M0 14Q2 0 15 0q14 1 15 13 0 7-7 7-6 0-5-4 1-5-5-6Q4 10 0 17z" fill="url(#edgeg)" /><path d="M13 12q-4 4-2 9 3 5 9 5 4 0 7-3-5 1-8-2-4-3-2-7 0-3-4-2z" fill="#0d4a94" /><path d="M17 14q-3 6 4 7 5 1 8-3 0 4-3 6-6 1-9-3-2-3 0-7z" fill="#e8f2fb" /></svg></button>
      <button class="relative flex h-[59px] w-[59px] items-center justify-center" aria-label="文件资源管理器"><svg class="h-[30px] w-[30px]" viewBox="0 0 30 30"><path d="M0 4q0-2 2-2h9l3 4v4H0z" fill="#d9930d" /><path d="M0 8h12l3-2h15v20q0 2-2 2H2q-2 0-2-2z" fill="#ffcf48" /><path d="M5 28v-5q0-3 3-3h14q3 0 3 3v5z" fill="#1279cf" /><path d="M9 24h12" stroke="#0a4f94" stroke-width="1.500" /></svg><span class="absolute bottom-1.5 h-1 w-2 rounded-full bg-[#858585]"></span></button>
      <button class="flex h-[59px] w-[58px] items-center justify-center" aria-label="WPS"><svg class="h-[30px] w-[30px]" viewBox="0 0 30 30"><path d="M0 6h9l5 13 4-13h12l-7 19h-6l-3-8-3 8H8z" fill="#f3281a" /><path d="M5 9l6 13M14 6l6 15 4-11" stroke="#fff" stroke-width="1.500" fill="none" /></svg></button>
      <button class="relative flex h-[59px] w-[56px] items-center justify-center" aria-label="哔哩哔哩"><svg class="h-[30px] w-[30px]" viewBox="0 0 30 30"><rect width="30" height="30" rx="6" fill="#fb4c86" /><path d="M9 3l3 4M21 3l-3 4M5 9q0-2 2-2h16q2 0 2 2v13q0 2-2 2H7q-2 0-2-2z" fill="none" stroke="#fd8fb3" stroke-width="1.500" /><path d="M4 11v8h3v-4H4M10.500 15v5M13 11v9M17 11v8h3v-4h-3M23.500 15v5M26 11v9" stroke="#fff" stroke-width="1.500" fill="none" /></svg><span class="absolute bottom-1.5 h-1 w-2 rounded-full bg-[#858585]"></span></button>
      <button class="relative flex h-[59px] w-14 items-center justify-center" aria-label="USART HMI"><svg class="h-[30px] w-[30px]"><use href="#logo" /></svg><span class="absolute bottom-1.5 h-1 w-2 rounded-full bg-[#858585]"></span></button>
    </div>
    <div class="flex flex-1 items-center justify-end pr-6">
      <svg class="mr-6 h-2 w-3" viewBox="0 0 12 8"><path d="M1 7l5-5 5 5" fill="none" stroke="#222" stroke-width="1.500" /></svg>
      <svg class="mr-5 h-5 w-5" viewBox="0 0 20 20"><path d="M1 9a8.500 8.500 0 0 1 16-4M18 1v5h-5M1 19v-5h5M2 14q2 4 6 5" fill="none" stroke="#222" stroke-width="1.500" /><circle cx="14.500" cy="15" r="5" fill="#ff9a0a" /></svg>
      <svg class="mr-[9px] h-5 w-5" viewBox="0 0 20 20"><path d="M1 8q9-9 18 0M4 11.500q6-6 12 0M6.500 14.500q3.500-3.500 7 0" fill="none" stroke="#222" stroke-width="1.500" /><circle cx="10" cy="17" r="1.500" fill="#222" /></svg>
      <svg class="mr-3 h-5 w-5" viewBox="0 0 20 20"><path d="M1 7.500h3l5-4v13l-5-4H1zM12 7q2 3 0 6M14.500 5q4 5 0 10" fill="none" stroke="#222" stroke-width="1.300" /><path d="M17 3q5 7 0 14" fill="none" stroke="#aaa" stroke-width="1.300" /></svg>
      <svg class="mr-[22px] h-5 w-5" viewBox="0 0 20 20"><path d="M2 6.500h15v9H2z" fill="none" stroke="#222" stroke-width="1.500" /><path d="M6 8h9v6H4v-3zM18 9h2v4h-2zM3 0h3v4h2l-5 7V6H0z" fill="#222" /></svg>
      <div class="pb-0.5 text-right text-sm leading-5">11:56<br>2025-10-18</div>
    </div>
  </div>

  <script>
    const icon = (id, cls) => `<svg class="${cls}"><use href="#${id}"/></svg>`;
    const grip = '<div class="h-[22px] w-3 border-l-2 border-dotted border-[#6a9be0]"></div>';
    const groupClass = 'flex h-8 items-center rounded-md border-b-2 border-[#8db6ee] bg-linear-to-b from-[#e1edff] to-[#b8d6ff] pl-1';

    // 第一行工具栏
    const groups = [
      [['open', '打开'], ['new', '新建'], ['save', '保存'], ['build', '编译'], ['debug', '调试'], ['download', '下载']],
      [['copy', '复制'], ['cut', '剪切'], ['paste', '粘贴'], ['lock', '锁定'], ['unlock', '解锁']],
      [['del', '删除'], ['undo', '撤销(9)'], ['redo', '恢复(0)']]
    ];
    const toolButton = ([id, text]) =>
      `<button class="${id === 'save' ? 'mr-3.5 flex items-center gap-1.5 text-[#9aa0a8]' : 'mr-3.5 flex items-center gap-1.5 last:mr-2'}">${icon(id, 'h-5 w-[18px]')}<span class="${text.length > 2 ? 'w-[51px] text-left' : ''}">${text}</span>${id === 'paste' ? icon('caret', 'ml-0.5 h-1 w-2') : ''}</button>`;
    document.getElementById('bar1').innerHTML = groups.map(g => `<div class="${groupClass}">${grip}${g.map(toolButton).join('')}</div>`).join('') + `
      <div class="${groupClass}">${grip}${toolButton(['gear', '设备'])}
        <button class="mr-4 font-['Liberation_Mono',monospace] text-[13px]">ID</button>
        <span class="mr-2.5 font-['Liberation_Mono',monospace] text-xs">100%</span>
        <button aria-label="缩小"><svg class="h-5 w-5" viewBox="0 0 20 20"><circle cx="10" cy="10" r="9" fill="url(#knob)" stroke="#5c7fae" stroke-width="1.500"/><path d="M5 10h10" stroke="#4b5563" stroke-width="2.500"/></svg></button>
        <input type="range" aria-label="缩放" class="h-4 w-32 appearance-none bg-[linear-gradient(#6f9bd8,#6f9bd8)] bg-size-[100%_2px] bg-center bg-no-repeat [&::-webkit-slider-thumb]:h-4 [&::-webkit-slider-thumb]:w-[11px] [&::-webkit-slider-thumb]:appearance-none [&::-webkit-slider-thumb]:rounded-b-md [&::-webkit-slider-thumb]:border-2 [&::-webkit-slider-thumb]:border-[#6583b4] [&::-webkit-slider-thumb]:bg-[#d6e6fb]">
        <button class="mr-0.5" aria-label="放大"><svg class="h-5 w-5" viewBox="0 0 20 20"><circle cx="10" cy="10" r="9" fill="url(#knob)" stroke="#5c7fae" stroke-width="1.500"/><path d="M5 10h10M10 5v10" stroke="#4b5563" stroke-width="2.500"/></svg></button>
      </div>`;

    // 第二行工具栏
    const aligns = ['a-up', 'a-down', 'al-left', 'al-right', 'al-top', 'al-bottom', 'al-mid', 'al-center', 'al-grid', 'dist-h', 'dist-hx', 'dist-hi', 'dist-v', 'dist-vx', 'dist-vi'];
    document.getElementById('bar2').innerHTML = `
      <div class="${groupClass}"><div class="h-[22px] w-1.5 border-l-2 border-dotted border-[#6a9be0]"></div>${aligns.map(id => `<button class="flex w-[30px] justify-center" aria-label="${id}">${icon(id, 'h-5 w-5')}</button>`).join('')}</div>
      <div class="${groupClass}"><div class="h-[22px] w-1.5 border-l-2 border-dotted border-[#6a9be0]"></div>
        <button class="w-[30px] font-bold font-['Liberation_Mono',monospace] text-base underline decoration-2">C</button>
        <button class="flex w-[30px] justify-center text-[#b9c3d2]" aria-label="注释">${icon('cmt', 'h-5 w-5')}</button>
        <button class="relative flex w-[30px] justify-center text-[#b9c3d2]" aria-label="取消注释">${icon('uncmt', 'h-5 w-5')}<svg class="absolute right-1 bottom-0 h-2 w-2" viewBox="0 0 8 8"><path d="M1 1l6 6M7 1L1 7" stroke="#8e97a5" stroke-width="1.500"/></svg></button>
      </div>`;

    const tools = [
      ['t-text', '文本'], ['t-scroll', '滚动文本'], ['t-num', '数字'], ['t-float', '虚拟浮点数'], ['t-btn', '按钮'],
      ['t-prog', '进度条'], ['t-pic', '图片'], ['t-cut', '切图'], ['t-hot', '触摸热区'], ['t-cap', '触摸捕捉'],
      ['t-ptr', '指针'], ['t-wave', '曲线/波形'], ['t-slide', '滑块'], ['t-clock', '定时器'], ['t-var', '变量'],
      ['t-dual', '双态按钮'], ['t-check', '复选框'], ['t-radio', '单选框'], ['t-qr', '二维码']
    ];
    document.getElementById('tools').innerHTML = tools.map(([id, name]) =>
      `<li class="flex h-[30px] items-center gap-[3px] pl-0.5 pb-1">${icon(id, 'h-5 w-5')}${name}</li>`).join('');

    document.getElementById('fontbar').innerHTML = ['plus', 'minus', 'refresh', 'import', 'r-up', 'r-down', 'trash'].map(id =>
      `<button aria-label="${id}">${icon(id, 'h-[18px] w-[18px]')}</button>`).join('') +
      `<span class="mr-0.5 ml-auto font-['Liberation_Mono',monospace] text-[13px] text-[#1d4a94]">4</span>`;

    document.getElementById('fonts').innerHTML = [
      'ID:0  gb2312(h:24,encode:gb2312,qty:8178)',
      'ID:1  24ascii(h:24,encode:ascii,qty:95)',
      'ID:2  16中文(h:16,encode:gb2312,qty:8178)',
      'ID:3  16ascii(h:16,encode:ascii,qty:95)'
    ].map(t => `<li class="h-[25px] overflow-hidden bg-[#dfedbc] pl-0.5 leading-6">${t}</li>`).join('');

    document.getElementById('pagebar').innerHTML = ['p-add', 'p-del', 'p-folder', 'r-up', 'r-down', 'p-copy', 'page'].map(id =>
      `<button aria-label="${id}">${icon(id, 'h-5 w-5')}</button>`).join('') + icon('caret', 'h-1 w-1.5 text-[#1d4a94]') +
      `<button class="ml-auto flex h-full w-3.5 flex-col items-center justify-center gap-1 bg-[#a9c8f2]" aria-label="更多"><svg class="h-5 w-2.5" viewBox="0 0 10 20"><path d="M1 2l3 2-3 2zM6 2l3 2-3 2zM1 12h8v1.500H1zM1 15h8l-4 4z" fill="#111"/></svg></button>`;

    // 页面列表
    const pages = ['page0', 'page1', 'page2', 'page3', 'page4', 'page5', 'page6', 'page7', 'keybdAP', 'keybdB', 'page8'];
    document.getElementById('pages').innerHTML = pages.map((name, i) => {
      const kb = name.startsWith('keybd');
      const sel = name === 'page8';
      return `<li class="flex h-[25px] items-center pr-px pl-0.5 font-['Liberation_Mono',monospace] text-[13px]">
        <span class="w-[19px] text-[#8c8c8c]">${i}</span>
        <span class="${sel ? 'flex h-6 flex-1 items-center gap-1 bg-[#0000ff] text-white' : kb ? 'flex h-6 flex-1 items-center gap-1 text-[#0000ff]' : 'flex h-6 flex-1 items-center gap-1'}">
          <span class="${kb ? 'bg-[#ff0000]' : ''}">${icon('page', 'h-5 w-5')}</span>${name}</span></li>`;
    }).join('');

    const props = [['type', '116'], ['id', '2'], ['objname', 't0'], ['vscope', '私有'], ['sta', '单色'], ['style', '平面'], ['key', '无'], ['font', '0'], ['bco', '65535'], ['pco', '0'], ['', '居中']];
    document.getElementById('props').innerHTML = props.map(([k, v], i) => {
      const swatch = k === 'bco' ? '<span class="mr-0.5 inline-block h-6 w-6 border border-black bg-white"></span>'
        : k === 'pco' ? '<span class="mr-0.5 inline-block h-6 w-6 bg-black"></span>' : '';
      return `<tr class="${i > 6 ? 'h-[29px] text-[#0a870a]' : 'h-[29px]'}">
        <th class="border-r border-b border-[#c4c4c4] p-0 pl-1 text-left font-normal font-['Liberation_Mono',monospace] text-[13px]">${k}</th>
        <td class="border-r border-b border-[#c4c4c4] p-0 pl-0.5 ${/\d/.test(v) ? "font-['Liberation_Mono',monospace] text-[13px]" : ''}"><div class="flex items-center">${swatch}${v}</div></td></tr>`;
    }).join('');

    const log = [...Array(9).fill('页面编译完成'), 'Flash', '编译成功'];
    document.getElementById('log').innerHTML = log.map(t => `<p class="h-5">${t}</p>`).join('');
  </script>
</body>

</html>
